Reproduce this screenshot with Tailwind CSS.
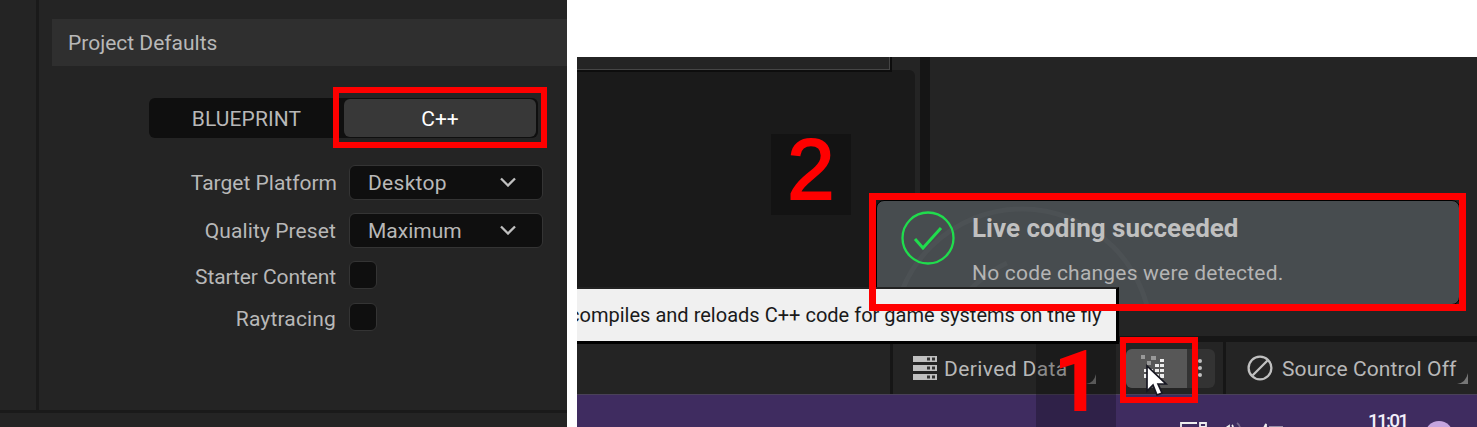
<!DOCTYPE html>
<html lang="en">
<head>
<meta charset="utf-8">
<title>Live Coding</title>
<script src="https://cdn.jsdelivr.net/npm/@tailwindcss/browser@4"></script>
</head>
<body class="bg-white w-[1477px] h-[427px] overflow-hidden font-['Roboto',sans-serif] text-[21px] leading-6 text-[#b8b8b8]">
<div class="flex gap-[10px] h-[427px]">
  <!-- Project settings -->
  <section class="w-[567px] h-full flex flex-col bg-[#242424] shrink-0 whitespace-nowrap">
    <div class="flex h-[410px]">
      <div class="w-[39px] border-r-[3px] border-[#1a1a1a] shrink-0"></div>
      <div class="flex-1 pt-[19px]">
        <header class="ml-[13px] h-[47px] bg-[#2f2f2f] flex items-center pl-4"><span>Project Defaults</span></header>
        <div class="relative ml-[110px] mt-8 w-[389px] h-10 rounded-md bg-[#0f0f0f] flex items-center">
          <div class="w-[195px] text-center pt-px tracking-[0.1px]">BLUEPRINT</div>
          <div class="w-[192px] h-[38px] pt-px rounded-md bg-[#383838] text-white flex items-center justify-center">C++</div>
          <div class="absolute left-[184px] -top-[11px] w-[214px] h-[61px] border-[6.5px] border-[#ff0000]"></div>
        </div>
        <div class="mt-[27px] flex items-center h-[34px]">
          <div class="w-[298px] text-right pt-0.5">Target Platform</div>
          <div class="ml-[12px] w-[194px] h-[35px] rounded-md border border-[#343434] bg-[#0f0f0f] flex items-center justify-between pl-[18px] pr-[26px]"><span class="pt-0.5 tracking-[0.3px]">Desktop</span>
            <svg class="w-4 h-[10px]" viewBox="0 0 16 10" fill="none" stroke="#c0c0c0" stroke-width="2.3"><path d="M1 1.5 8 8.5 15 1.5"/></svg></div>
        </div>
        <div class="mt-[14px] flex items-center h-[34px]">
          <div class="w-[297px] text-right pt-0.5 tracking-[0.1px]">Quality Preset</div>
          <div class="ml-[13px] w-[194px] h-[35px] rounded-md border border-[#343434] bg-[#0f0f0f] flex items-center justify-between pl-[18px] pr-[26px]"><span class="pt-0.5">Maximum</span>
            <svg class="w-4 h-[10px]" viewBox="0 0 16 10" fill="none" stroke="#c0c0c0" stroke-width="2.3"><path d="M1 1.5 8 8.5 15 1.5"/></svg></div>
        </div>
        <div class="mt-[14px] flex items-center h-7">
          <div class="w-[297px] text-right pt-[3px] tracking-[-0.1px]">Starter Content</div>
          <div class="ml-[13px] size-7 rounded-md border border-[#343434] bg-[#0f0f0f]"></div>
        </div>
        <div class="mt-[14px] flex items-center h-7">
          <div class="w-[297px] text-right pt-[3px] tracking-[0.15px]">Raytracing</div>
          <div class="ml-[13px] size-7 rounded-md border border-[#343434] bg-[#0f0f0f]"></div>
        </div>
      </div>
    </div>
    <div class="flex-1 border-t-[3px] border-[#1a1a1a]"></div>
  </section>

  <!-- Editor window -->
  <section class="relative mt-[57px] w-[900px] h-[370px] flex flex-col whitespace-nowrap overflow-hidden">
    <div class="h-[279px] flex bg-[#242424]">
      <div class="w-[343px] pr-[5px]">
        <div class="h-[13px]"><div class="relative w-[315px] h-[15px] border-r-2 border-b-2 border-[#0d0d0d]"><div class="w-full h-full border-r border-b border-[#454545] bg-[#242424]"></div></div></div>
        <div class="h-[266px] rounded-tr-md bg-[#1a1a1a]"></div>
      </div>
      <div class="w-[10px] bg-[#151515]"></div>
    </div>
    <div class="h-[6px] bg-[#161616]"></div>
    <div class="h-[53px] bg-[#242424] flex items-center border-b border-[#4a4159]">
      <div class="w-[316px] h-full border-r-[3px] border-[#161616]"></div>
      <div class="w-[333px] h-full border-r-[3px] border-[#161616] flex items-center pl-[20px]">
        <svg class="w-6 h-[24px]" viewBox="0 0 24 24"><g fill="#c0c0c0"><path d="M0 0h24v6H0zM0 9h24v6H0zM0 18h24v6H0z"/></g><path fill="#333" d="M14 1.5h3v3h-3zM19 1.5h3v3h-3zM14 10.5h3v3h-3zM19 10.5h3v3h-3zM14 19.5h3v3h-3zM19 19.5h3v3h-3z"/></svg>
        <span class="ml-[7px] pt-px tracking-[0.4px]">Derived Data</span>
        <svg class="ml-auto mt-[21px] size-[10px]" viewBox="0 0 10 10"><path fill="#777" d="M10 0v10H0Q8 9 10 0"/></svg>
        <div class="ml-[30px] mr-[8px] flex h-[39px] w-[89px] rounded-md overflow-hidden bg-[#333]">
          <div class="w-[61px] shrink-0 bg-[#575757] flex items-center pl-[15px] mr-[2px]">
            <svg class="w-6 h-[25px] mb-[3px]" viewBox="0 0 24 25"><g fill="#999"><path d="M0 1h4v4H0zM10 2h5v4h-5zM6 7h4v4H6z"/></g><g fill="#ededed"><path d="M19 5h4v3h-4zM19 10h4v3h-4zM19 15h4v3h-4zM19 20h4v4h-4zM14 10h4v3h-4zM14 15h4v3h-4zM14 20h4v4h-4zM3 15h4v3H3zM3 20h4v4H3zM8 15h4v3H8zM8 20h4v4H8z"/></g></svg>
          </div>
          <div class="flex flex-1 flex-col items-center justify-center gap-[3px] pr-1"><i class="size-1 rounded-full bg-[#c0c0c0]"></i><i class="size-1 rounded-full bg-[#c0c0c0]"></i><i class="size-1 rounded-full bg-[#c0c0c0]"></i></div>
        </div>
      </div>
      <div class="flex-1 h-full flex items-center pl-[21px]">
        <svg class="size-[26px]" viewBox="0 0 26 26" fill="none" stroke="#c0c0c0" stroke-width="2.3"><circle cx="13" cy="13" r="11.4"/><path d="M5.5 20.5 20.5 5.5"/></svg>
        <span class="ml-[9px] pt-px tracking-[0.1px]">Source Control Off</span>
        <svg class="ml-auto mr-[9px] mt-[21px] size-[11px]" viewBox="0 0 10 10"><path fill="#777" d="M10 0v10H0Q8 9 10 0"/></svg>
      </div>
    </div>
    <div class="h-[32px] bg-[#3f2c60] flex items-start pl-[602px] overflow-hidden">
      <svg class="w-[110px] h-[33px] shrink-0" viewBox="0 0 110 33" fill="none" stroke="#eee" stroke-width="1.8"><path d="M2 33V28H18M21 33V28h6v5M21 32h6M47 33l3-2v2M54 33q0-2-1-3M80 33h5l2-4v4M90 32.5h14"/><path d="M58 28q3 2 3 5" stroke="#756689"/></svg>
      <span class="ml-[79px] mt-[14px] w-[44px] shrink-0 text-[19px] font-medium tracking-[-1.8px] text-[#f2effa]">11:01</span>
      <div class="ml-[13px] mt-[26px] size-[28px] rounded-full bg-[#c5a5df] shrink-0"></div>
    </div>

    <!-- Notification toast -->
    <div class="absolute left-[299px] top-[143px] w-[584px] h-[105px] rounded-lg border border-black bg-[#474c4f] overflow-hidden flex pl-[24px] pt-[10px]">
      <svg class="absolute left-0 top-0 w-[300px] h-[104px]" viewBox="0 0 300 104" fill="none" stroke="#4c5154" stroke-width="5"><circle cx="145" cy="137" r="129"/><path d="M80 104Q102 75 130 62"/></svg>
      <svg class="relative size-[54px]" viewBox="0 0 54 54" fill="none" stroke="#20dc4d"><circle cx="27" cy="27" r="25.5" stroke-width="2.3"/><path d="M14 28 22 37 40 17" stroke-width="3"/></svg>
      <div class="relative ml-[17px] mt-[3px]">
        <div class="text-[26px] leading-[28px] font-bold text-[#c0c0c0]">Live coding succeeded</div>
        <div class="mt-[19px] text-[#b4b4b4] tracking-[0.2px]">No code changes were detected.</div>
      </div>
    </div>

    <!-- Tooltip -->
    <div class="absolute left-0 top-[230px] w-[542px] h-[57px] border-t-2 border-[#222] border-r-[3px] border-b-[3px] border-r-black border-b-black bg-[#f0f0f0] text-[#1a1a1a] flex items-center overflow-hidden"><span class="-ml-[8px] shrink-0 origin-left scale-x-[0.954]">compiles and reloads C++ code for game systems on the fly</span></div>

    <!-- Annotations -->
    <div class="absolute left-[292px] top-[136px] w-[597px] h-[118px] border-[7px] border-[#ff0000]"></div>
    <div class="absolute left-[194px] top-[77px] w-[80px] h-[81px] bg-[#131313] text-[#ff0000] text-[85px] leading-[71px] text-center [-webkit-text-stroke:2px_#ff0000] font-['Liberation_Sans',sans-serif]">2</div>
    <div class="absolute left-[459px] top-[287px] w-[80px] h-[83px] bg-black/25 text-[#ff0000] text-[85px] leading-[77px] pl-[3px] text-center font-bold font-['Roboto',sans-serif]">1</div>
    <div class="absolute left-[543px] top-[280px] w-[78px] h-[66px] border-[6.5px] border-[#ff0000]"></div>
    <svg class="absolute left-[568px] top-[307px] w-[24px] h-[34px]" viewBox="0 0 24 34"><path d="M2 2V27L8 21 12 31 17 29 13 20H21Z" fill="#fff" stroke="#171722" stroke-width="1.7"/></svg>
  </section>
</div>
</body>
</html>
